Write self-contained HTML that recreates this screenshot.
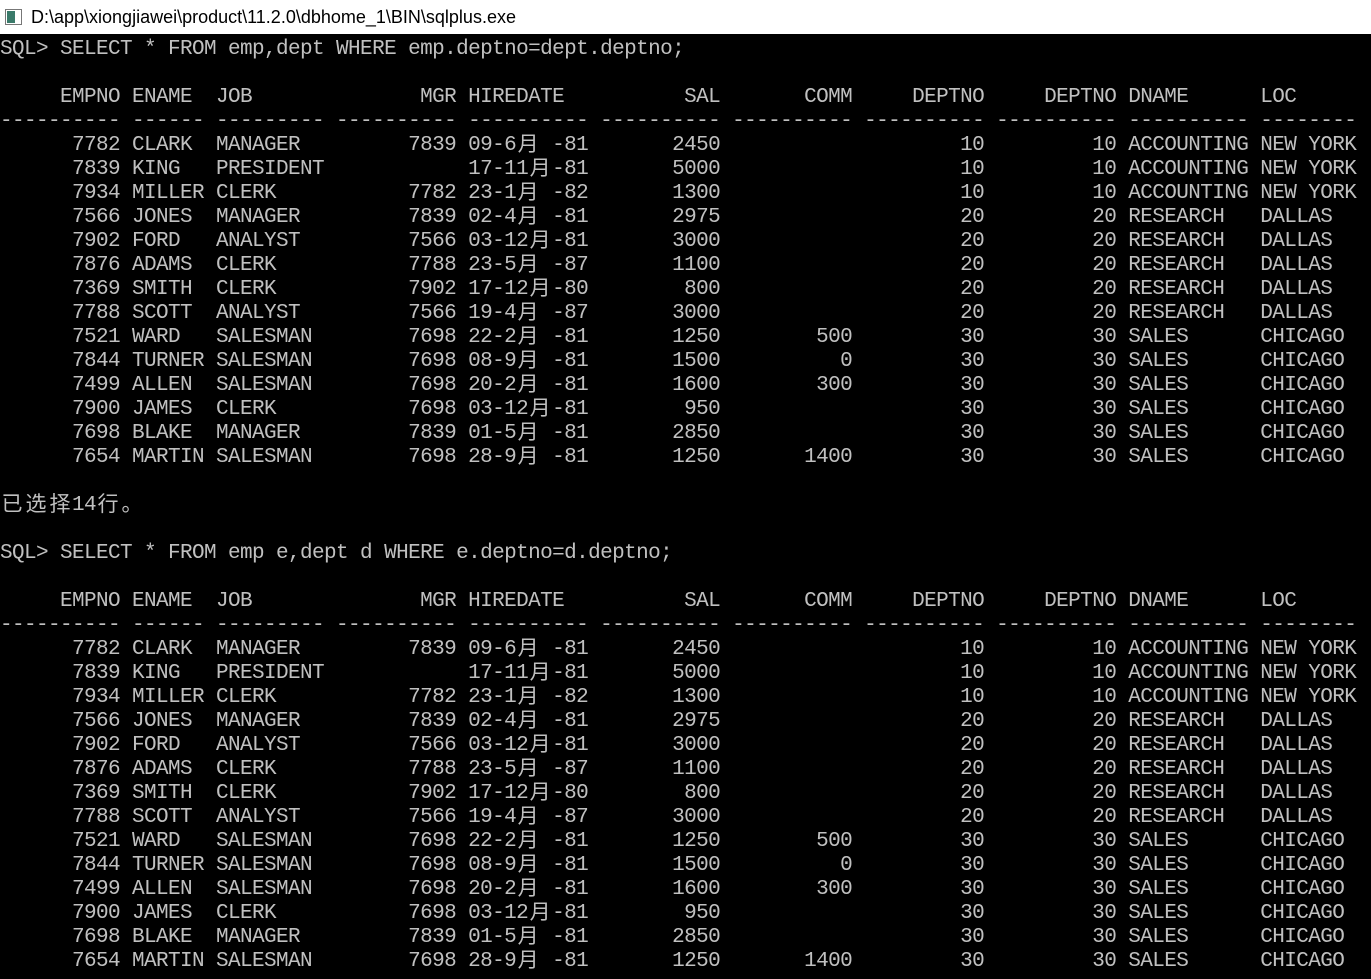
<!DOCTYPE html>
<html><head><meta charset="utf-8"><style>
html,body{margin:0;padding:0;background:#000;width:1371px;height:979px;overflow:hidden}
#t{position:absolute;left:0;top:0;width:1371px;height:34px;background:#fff;color:#000;font:18px "Liberation Sans",sans-serif;line-height:34px}
#t span{position:absolute;left:31px;top:0}
#ic{position:absolute;left:5px;top:9px;width:15px;height:14px;border:1px solid #777;background:#fff}
#ic:before{content:"";position:absolute;left:1px;top:1px;width:8px;height:12px;background:#3a7a6a}
pre{position:absolute;left:0;top:38px;margin:0;color:#c0c0c0;font-family:"Liberation Mono",monospace;font-size:21px;letter-spacing:-0.6px;line-height:24px;white-space:pre}
i{font-style:normal;display:inline-block;width:24px;height:24px;text-align:center;font-family:"Noto Sans CJK SC",sans-serif;font-size:21px;letter-spacing:0;vertical-align:top;line-height:24px;position:relative;top:-3px}
</style></head><body>
<div id="t"><div id="ic"></div><span>D:\app\xiongjiawei\product\11.2.0\dbhome_1\BIN\sqlplus.exe</span></div>
<pre>SQL&gt; SELECT * FROM emp,dept WHERE emp.deptno=dept.deptno;

     EMPNO ENAME  JOB              MGR HIREDATE          SAL       COMM     DEPTNO     DEPTNO DNAME      LOC
---------- ------ --------- ---------- ---------- ---------- ---------- ---------- ---------- ---------- --------
      7782 CLARK  MANAGER         7839 09-6<i>月</i> -81       2450                    10         10 ACCOUNTING NEW YORK
      7839 KING   PRESIDENT            17-11<i>月</i>-81       5000                    10         10 ACCOUNTING NEW YORK
      7934 MILLER CLERK           7782 23-1<i>月</i> -82       1300                    10         10 ACCOUNTING NEW YORK
      7566 JONES  MANAGER         7839 02-4<i>月</i> -81       2975                    20         20 RESEARCH   DALLAS
      7902 FORD   ANALYST         7566 03-12<i>月</i>-81       3000                    20         20 RESEARCH   DALLAS
      7876 ADAMS  CLERK           7788 23-5<i>月</i> -87       1100                    20         20 RESEARCH   DALLAS
      7369 SMITH  CLERK           7902 17-12<i>月</i>-80        800                    20         20 RESEARCH   DALLAS
      7788 SCOTT  ANALYST         7566 19-4<i>月</i> -87       3000                    20         20 RESEARCH   DALLAS
      7521 WARD   SALESMAN        7698 22-2<i>月</i> -81       1250        500         30         30 SALES      CHICAGO
      7844 TURNER SALESMAN        7698 08-9<i>月</i> -81       1500          0         30         30 SALES      CHICAGO
      7499 ALLEN  SALESMAN        7698 20-2<i>月</i> -81       1600        300         30         30 SALES      CHICAGO
      7900 JAMES  CLERK           7698 03-12<i>月</i>-81        950                    30         30 SALES      CHICAGO
      7698 BLAKE  MANAGER         7839 01-5<i>月</i> -81       2850                    30         30 SALES      CHICAGO
      7654 MARTIN SALESMAN        7698 28-9<i>月</i> -81       1250       1400         30         30 SALES      CHICAGO

<i>已</i><i>选</i><i>择</i>14<i>行</i><i>。</i>

SQL&gt; SELECT * FROM emp e,dept d WHERE e.deptno=d.deptno;

     EMPNO ENAME  JOB              MGR HIREDATE          SAL       COMM     DEPTNO     DEPTNO DNAME      LOC
---------- ------ --------- ---------- ---------- ---------- ---------- ---------- ---------- ---------- --------
      7782 CLARK  MANAGER         7839 09-6<i>月</i> -81       2450                    10         10 ACCOUNTING NEW YORK
      7839 KING   PRESIDENT            17-11<i>月</i>-81       5000                    10         10 ACCOUNTING NEW YORK
      7934 MILLER CLERK           7782 23-1<i>月</i> -82       1300                    10         10 ACCOUNTING NEW YORK
      7566 JONES  MANAGER         7839 02-4<i>月</i> -81       2975                    20         20 RESEARCH   DALLAS
      7902 FORD   ANALYST         7566 03-12<i>月</i>-81       3000                    20         20 RESEARCH   DALLAS
      7876 ADAMS  CLERK           7788 23-5<i>月</i> -87       1100                    20         20 RESEARCH   DALLAS
      7369 SMITH  CLERK           7902 17-12<i>月</i>-80        800                    20         20 RESEARCH   DALLAS
      7788 SCOTT  ANALYST         7566 19-4<i>月</i> -87       3000                    20         20 RESEARCH   DALLAS
      7521 WARD   SALESMAN        7698 22-2<i>月</i> -81       1250        500         30         30 SALES      CHICAGO
      7844 TURNER SALESMAN        7698 08-9<i>月</i> -81       1500          0         30         30 SALES      CHICAGO
      7499 ALLEN  SALESMAN        7698 20-2<i>月</i> -81       1600        300         30         30 SALES      CHICAGO
      7900 JAMES  CLERK           7698 03-12<i>月</i>-81        950                    30         30 SALES      CHICAGO
      7698 BLAKE  MANAGER         7839 01-5<i>月</i> -81       2850                    30         30 SALES      CHICAGO
      7654 MARTIN SALESMAN        7698 28-9<i>月</i> -81       1250       1400         30         30 SALES      CHICAGO</pre>
</body></html>
